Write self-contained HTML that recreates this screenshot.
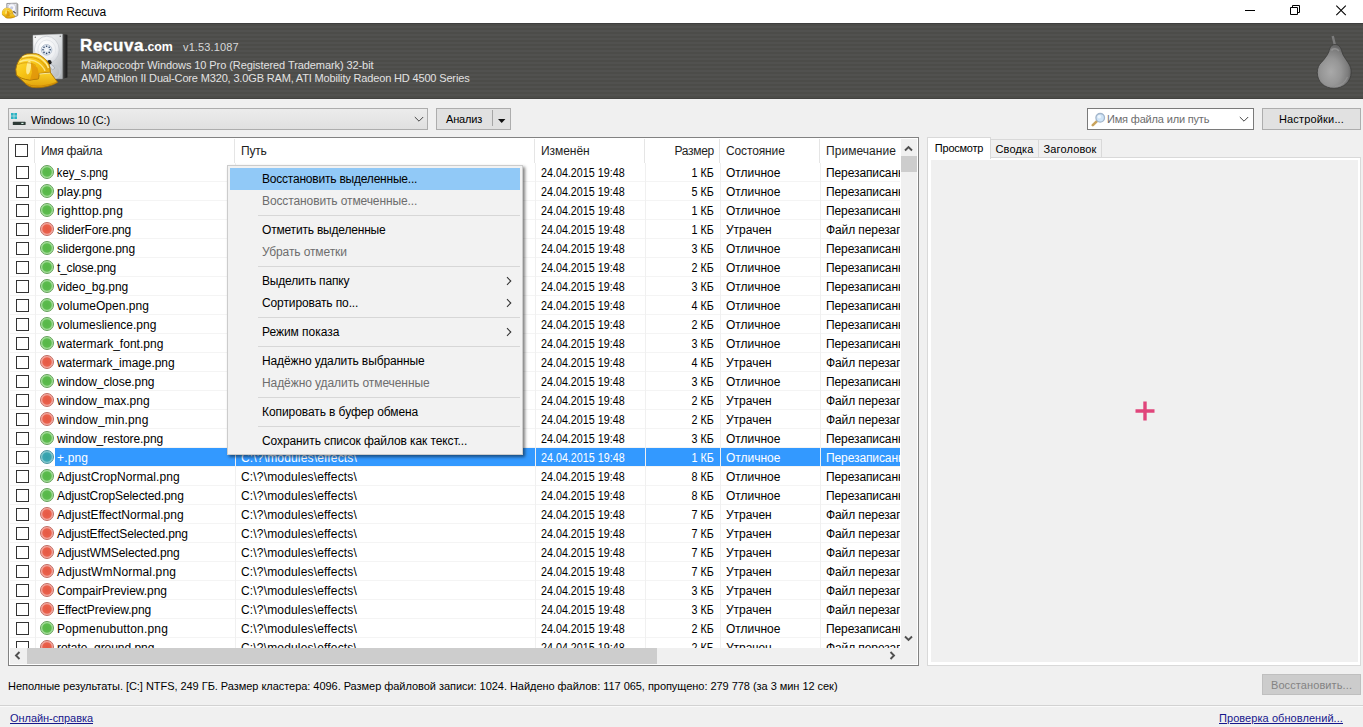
<!DOCTYPE html>
<html lang="ru">
<head>
<meta charset="utf-8">
<title>Piriform Recuva</title>
<style>
*{box-sizing:border-box;margin:0;padding:0}
html,body{width:1363px;height:727px;overflow:hidden;background:#f0f0f0}
body{position:relative;font-family:"Liberation Sans",sans-serif;font-size:12px;color:#000}
i{font-style:normal;display:block}
u{text-decoration:none;display:inline-block;transform-origin:0 50%}
.abs{position:absolute}

/* title bar */
#title{position:absolute;left:0;top:0;width:1363px;height:23px;background:#fff}
#title .t{position:absolute;left:23px;top:5px;font-size:12px;line-height:15px;color:#000;white-space:nowrap}

/* dark header */
#hdr{position:absolute;left:0;top:23px;width:1363px;height:76px;
 background:repeating-linear-gradient(to bottom,#4c4c49 0,#4c4c49 2px,#51514f 2px,#51514f 4px);
 border-top:1px solid #3e3e3e;border-bottom:1px solid #424240}
#hdr .brand{position:absolute;left:80px;top:10px;color:#fff;font-weight:bold;font-size:17px;line-height:24px;white-space:nowrap}
#hdr .brand small{font-size:12.4px}
#hdr .brand .b1{-webkit-text-stroke:.35px #fff}
#hdr .ver{position:absolute;left:183px;top:17px;color:#d8d8d8;font-size:11px;line-height:13px;white-space:nowrap}
#hdr .l2,#hdr .l3{position:absolute;left:81px;color:#e2e2e2;font-size:11px;line-height:13px;white-space:nowrap}
#hdr .l2{top:35px}
#hdr .l3{top:48px}

/* toolbar */
.combo{position:absolute;left:8px;top:108px;width:420px;height:22px;border:1px solid #adadad;background:linear-gradient(#ececec,#e0e0e0)}
.combo .tx{position:absolute;left:22px;top:4px;line-height:14px;font-size:11px;white-space:nowrap}
.btn{position:absolute;height:22px;border:1px solid #adadad;background:#e1e1e1;font-size:11px;line-height:20px;text-align:center;white-space:nowrap}
.search{position:absolute;left:1087px;top:108px;width:167px;height:22px;border:1px solid #7a7a7a;background:#fff}
.search .tx{position:absolute;left:19px;top:3px;line-height:14px;font-size:11px;color:#6d6d6d;white-space:nowrap}

/* list */
#list{position:absolute;left:8px;top:137px;width:911px;height:529px;border:1px solid #828282;background:#fff}
#lc{position:absolute;left:1px;top:1px;width:907px;height:525px;overflow:hidden;background:#fff}
.vg{position:absolute;top:24px;width:1px;height:485px;background:#f0f0f0}
#lhead{position:absolute;left:0;top:0;width:891px;height:24px;background:#fff}
#lhead span{position:absolute;top:5px;line-height:15px;font-size:12px;white-space:nowrap;color:#1e1e1e}
.vsep{position:absolute;top:0;width:1px;height:24px;background:#e5e5e5}
.row{position:absolute;left:0;width:901px;height:19px;border-bottom:1px solid #f4f4f4}
.row .c{position:absolute;top:2px;height:17px;line-height:17px;font-size:12px;white-space:nowrap;overflow:hidden}
.row .c b{font-weight:normal;display:inline-block;height:17px;padding:0 2px;transform-origin:0 50%}
.sz u{transform-origin:100% 50%}
.cb{position:absolute;left:16px;top:3px;width:13px;height:13px;border:1px solid #333;background:#fff}
.dot{position:absolute;left:40px;top:2px;width:14px;height:14px;border-radius:50%;border:1px solid}
.dg{border-color:#62a057;background:radial-gradient(circle closest-side,#56b747 0,#5cbb4e 70%,#98d88d 84%,#b0e3a7 100%)}
.dr{border-color:#c06a60;background:radial-gradient(circle closest-side,#e65843 0,#e9614c 70%,#f29d93 84%,#f6b2aa 100%)}
.ds{border-color:#47939e;background:radial-gradient(circle closest-side,#339fab 0,#3ba6b1 70%,#79c4cb 84%,#92cfd5 100%)}
.nm{left:55px;width:180px}
.pt{left:241px;width:290px}
.dt{left:541px;width:100px}
.sz{left:645px;width:69px;text-align:right}
.stt{left:726px;width:92px}
.nt{left:826px;width:75px;letter-spacing:-.1px}
.row.sel .c{color:#fff}
.row.sel .selbg{display:block}
.selbar{position:absolute;left:55px;width:845px;height:18px;background:#3399ff}

/* scrollbars */
.sbv{position:absolute;left:891px;top:0;width:16px;height:509px;background:#f0f0f0}
.sbh{position:absolute;left:0;top:509px;width:907px;height:16px;background:#f0f0f0}
.thumb{position:absolute;background:#cdcdcd}

/* menu */
#menu{position:absolute;left:227px;top:165px;width:296px;height:290px;background:#f2f2f2;border:1px solid #ccc;box-shadow:2px 2px 3px rgba(0,0,0,.5);padding:2px}
#menu .it{height:22px;line-height:22px;padding-left:32px;font-size:12px;white-space:nowrap;position:relative;color:#000}
#menu .it.hl{background:#91c9f7}
#menu .it.dis{color:#6d6d6d}
#menu .sp{height:7px;position:relative}
#menu .sp:after{content:"";position:absolute;left:28px;right:0;top:3px;height:1px;background:#d7d7d7}
#menu svg{position:absolute;right:8px;top:6px}

/* right pane */
.tab{position:absolute;font-size:11px;line-height:14px;white-space:nowrap;text-align:center;color:#000}
#pane{position:absolute;left:927px;top:157px;width:434px;height:509px;border:1px solid #d9d9d9;background:#fff;padding:2px 2px 3px 3px}
#pane i{width:100%;height:100%;background:#f0f0f0}

/* status */
#status{position:absolute;left:8px;top:679px;font-size:11px;line-height:14px;white-space:nowrap;color:#000}
#hr{position:absolute;left:0;top:705px;width:1363px;height:1px;background:#d2d2d2}
.lnk{position:absolute;top:711px;font-size:11px;line-height:14px;color:#17178c;text-decoration:underline;white-space:nowrap}
/*FIT*/
#title .t{letter-spacing:-0.157px}
#hdr .brand .b1{letter-spacing:0.619px}
#hdr .brand small{letter-spacing:-0.105px}
#hdr .ver{letter-spacing:0.126px}
#hdr .l2{letter-spacing:-0.084px}
#hdr .l3{letter-spacing:-0.157px}
.combo .tx{letter-spacing:-0.153px}
#bAn span{letter-spacing:-0.190px}
.search .tx{letter-spacing:-0.172px}
#bSet span{letter-spacing:0.174px}
#h1{letter-spacing:-0.282px}
#h2{letter-spacing:-0.244px}
#h3{letter-spacing:-0.055px}
#h4{letter-spacing:-0.292px}
#h5{letter-spacing:-0.132px}
#h6{letter-spacing:0.053px}
#m1{letter-spacing:-0.211px}
#m2{letter-spacing:-0.111px}
#m3{letter-spacing:-0.192px}
#m4{letter-spacing:-0.106px}
#m5{letter-spacing:-0.175px}
#m6{letter-spacing:-0.112px}
#m7{letter-spacing:-0.036px}
#m8{letter-spacing:-0.117px}
#m9{letter-spacing:-0.079px}
#m10{letter-spacing:-0.080px}
#m11{letter-spacing:-0.094px}
#t1{letter-spacing:-0.244px}
#t2{letter-spacing:0.177px}
#t3{letter-spacing:0.120px}
#status span{letter-spacing:-0.041px}
#bRec span{letter-spacing:0.099px}
#lk1{letter-spacing:-0.055px}
#lk2{letter-spacing:0.063px}
#r0 .nm b{display:inline-block;transform:scaleX(0.9341)}
#r1 .nm b{letter-spacing:0.052px}
#r2 .nm b{letter-spacing:0.226px}
#r3 .nm b{letter-spacing:-0.187px}
#r4 .nm b{letter-spacing:-0.052px}
#r5 .nm b{letter-spacing:-0.208px}
#r6 .nm b{letter-spacing:-0.082px}
#r7 .nm b{letter-spacing:0.042px}
#r8 .nm b{letter-spacing:-0.000px}
#r9 .nm b{letter-spacing:0.019px}
#r10 .nm b{letter-spacing:-0.060px}
#r11 .nm b{letter-spacing:-0.035px}
#r12 .nm b{letter-spacing:-0.008px}
#r13 .nm b{letter-spacing:0.151px}
#r14 .nm b{letter-spacing:-0.067px}
#r15 .nm b{letter-spacing:0.145px}
#r16 .nm b{letter-spacing:0.065px}
#r17 .nm b{letter-spacing:-0.124px}
#r18 .nm b{letter-spacing:0.039px}
#r19 .nm b{letter-spacing:-0.124px}
#r20 .nm b{letter-spacing:-0.102px}
#r21 .nm b{letter-spacing:0.128px}
#r22 .nm b{letter-spacing:-0.040px}
#r23 .nm b{letter-spacing:-0.103px}
#r24 .nm b{letter-spacing:0.171px}
#r25 .nm b{letter-spacing:-0.047px}
.pt u{letter-spacing:0.167px}
.dt u{display:inline-block;transform:scaleX(0.8949)}
.sz u{display:inline-block;transform:scaleX(0.8965)}
.stt u{letter-spacing:-0.013px}
/*ENDFIT*/
</style>
</head>
<body>
<svg width="0" height="0" style="position:absolute"><defs>
      <linearGradient id="hd" x1="0" y1="0" x2="1" y2="1"><stop offset="0" stop-color="#fbfbfb"/><stop offset=".55" stop-color="#dcdfe2"/><stop offset="1" stop-color="#aeb2b6"/></linearGradient>
      <linearGradient id="sd" x1="0" y1="0" x2="1" y2="0"><stop offset="0" stop-color="#5a5a5a"/><stop offset=".5" stop-color="#2c2c2c"/><stop offset="1" stop-color="#1c1c1c"/></linearGradient>
      <radialGradient id="pl" cx=".4" cy=".35" r=".75"><stop offset="0" stop-color="#ffffff"/><stop offset=".7" stop-color="#eceef1"/><stop offset="1" stop-color="#c9cdd3"/></radialGradient>
      <linearGradient id="hat" x1="0" y1="0" x2="1" y2="1"><stop offset="0" stop-color="#ffe24a"/><stop offset=".45" stop-color="#f8c617"/><stop offset="1" stop-color="#dd9c07"/></linearGradient>
      <linearGradient id="brim" x1="0" y1="0" x2="0" y2="1"><stop offset="0" stop-color="#fbd22a"/><stop offset="1" stop-color="#e0a008"/></linearGradient>
    </defs><symbol id="hdd" viewBox="0 0 58 60">
    
    <path d="M48.300 1.100L53.400 1.800L53.400 44.400L48.300 45.700Z" fill="url(#sd)"/>
    <path d="M19 2.300L48.300 1.100L48.300 45.700L19.400 45.700Z" fill="url(#hd)" stroke="#b9bcc0" stroke-width=".5"/>
    <circle cx="21.300" cy="4.300" r=".8" fill="#777"/><circle cx="46.300" cy="3.300" r=".8" fill="#777"/>
    <ellipse cx="32.800" cy="17" rx="12.400" ry="13.800" fill="url(#pl)" stroke="#c3c7cd" stroke-width=".7"/>
    <ellipse cx="32.800" cy="17" rx="9" ry="10" fill="none" stroke="#e3e6ea" stroke-width="1"/>
    <circle cx="32.600" cy="16.800" r="5.300" fill="#e3eaf2" stroke="#aab6c6" stroke-width=".8"/>
    <g fill="#2f4568"><circle cx="32.600" cy="13.200" r=".8"/><circle cx="35.200" cy="14.300" r=".8"/><circle cx="36.200" cy="16.800" r=".8"/><circle cx="35.200" cy="19.400" r=".8"/><circle cx="32.600" cy="20.400" r=".8"/><circle cx="30" cy="19.400" r=".8"/><circle cx="29" cy="16.800" r=".8"/><circle cx="30" cy="14.300" r=".8"/></g>
    <circle cx="32.600" cy="16.800" r="1.500" fill="#f6f9fc"/>
    <path d="M38 33 C43 31 46.500 35 46 40 C45.500 44 42 45.500 39 45" fill="none" stroke="#c3c8ce" stroke-width="1.600"/>
    <path d="M34 27.500L41 35L38.500 37L32.500 30Z" fill="#d9dde2" stroke="#8d9198" stroke-width=".5"/>
    <circle cx="35.400" cy="29.200" r="2.200" fill="#1f1f1f"/>
    </symbol><symbol id="helmet" viewBox="0 0 58 60">
    <path d="M2.400 42 L11.600 50.800 C14 53 17 54.400 18.900 54.400 C27 55.500 38 53 43.600 49.300 L36.400 39.500 L25 40.500 L24.500 45.700 L15.800 46.700 Z" fill="url(#brim)" stroke="#a87204" stroke-width=".9" stroke-linejoin="round"/>
    <path d="M2.400 42 L1.800 36.400 C2.500 31 5 26.500 7.500 24 C10 22 12 21 13.200 20.900 L22 20.700 C25 21.500 26 22 27.100 23 C30 25 31.500 26.500 32.300 27.100 C34 29.500 35 31 35.400 32.200 C36 35 36.400 37 36.400 39.500 L25 40.500 L24.500 45.700 L15.800 47.200 C10 46.500 5 44.500 2.400 42 Z" fill="url(#hat)" stroke="#a87204" stroke-width=".9" stroke-linejoin="round"/>
    <path d="M16.600 29.200 L23.500 34.700 L24.800 40.500 L24.500 45.700 L16 46.900 L18 39.500 Z" fill="#de8f08" opacity=".7"/>
    <ellipse cx="14.600" cy="34.500" rx="2.300" ry="7" fill="#fff6b4" opacity=".75" transform="rotate(8 14.600 34.500)"/>
    <path d="M8.400 24 C14 21.300 22 21.800 27 25.300 C31 28.300 33.500 31.300 34.500 35" fill="none" stroke="#fff0a0" stroke-width="1.500" opacity=".9"/>
    <path d="M7 26.300 C13 23.500 21 24 26 27.500 C29.800 30.300 32.300 33.300 33.300 36.800" fill="none" stroke="#d4940a" stroke-width=".9" opacity=".85"/>
    <path d="M5.500 28.800 C11.500 26 19.500 26.500 24.500 30 C28 32.500 30 35 31 38" fill="none" stroke="#fff0a0" stroke-width="1.400" opacity=".8"/>
    <path d="M4.300 31.500 C10 28.800 17.500 29.200 22 32.500" fill="none" stroke="#d4940a" stroke-width=".9" opacity=".8"/>
    <path d="M25.200 41 L36 40.100" stroke="#fff3a8" stroke-width="1" opacity=".9"/>
    <path d="M12 50.800 C20 55 34 53 43 49.200" fill="none" stroke="#c98608" stroke-width="1.200" opacity=".8"/>
  </symbol></svg>

<div id="title">
  <svg class="abs" style="left:0;top:0" width="22" height="22" viewBox="0 0 22 22">
    <path d="M6.800 3.500L16.500 3.200L17.800 4L17.800 15.500L16.500 16.300L7 16.300Z" fill="#e6e8ec" stroke="#8d8d8d" stroke-width=".9" stroke-linejoin="round"/>
    <path d="M16.500 3.200L17.800 4L17.800 15.500L16.500 16.300Z" fill="#9c9c9c"/>
    <ellipse cx="11.800" cy="8" rx="3.800" ry="4.200" fill="#f8f8fc" stroke="#b4b6c8" stroke-width=".6"/>
    <circle cx="11.700" cy="7.800" r="1.600" fill="#c6cce6"/>
    <path d="M13.200 11.200L15.800 13.200" stroke="#555" stroke-width="1.200"/>
    <svg x="1.400" y="1.700" width="18.600" height="18.300" viewBox="0 0 58 60" preserveAspectRatio="none"><use href="#helmet"/></svg>
  </svg>
  <div class="t">Piriform Recuva</div>
  <!-- window controls -->
  <svg class="abs" style="left:1230px;top:0" width="133" height="23" viewBox="0 0 133 23">
    <path d="M15 10.5H25" stroke="#000" stroke-width="1"/>
    <path d="M60.5 7.5H67.5V14.5H60.5Z M62.500 7.5V5.500H69.500V12.500H67.5" stroke="#000" stroke-width="1" fill="none"/>
    <path d="M106.300 5.700L115.800 15.200M115.800 5.700L106.300 15.200" stroke="#000" stroke-width="1.050"/>
  </svg>
</div>

<div id="hdr">
  <!-- logo -->
  <svg class="abs" style="left:14px;top:9px" width="58" height="60"><use href="#hdd"/><use href="#helmet"/></svg>
  <div class="brand"><span class="b1">Recuva</span><small>.com</small></div>
  <div class="ver">v1.53.1087</div>
  <div class="l2">Майкрософт Windows 10 Pro (Registered Trademark) 32-bit</div>
  <div class="l3">AMD Athlon II Dual-Core M320, 3.0GB RAM, ATI Mobility Radeon HD 4500 Series</div>
  <!-- pear -->
  <svg class="abs" style="left:1314px;top:9px" width="40" height="60" viewBox="0 0 40 60">
    <defs><radialGradient id="pr" cx=".4" cy=".62" r=".6"><stop offset="0" stop-color="#a9a9a9"/><stop offset=".5" stop-color="#969696"/><stop offset=".85" stop-color="#7c7c7c"/><stop offset="1" stop-color="#666"/></radialGradient></defs>
    <path d="M18.700 3L21 12.500" stroke="#7c7c7c" stroke-width="2.400" fill="none"/>
    <path d="M21 11.500 C24.500 11.500 27 14 28 19 C29 23 31.500 25.500 34 29.500 C36.500 33 37.200 36 37.200 39 C37.200 49 29 55.300 20 55.300 C10.500 55.300 3.300 49 3.300 39.500 C3.300 35 5 31.500 7.400 29.500 C10.500 26 13 23 14.800 19 C16 14 17.500 11.500 21 11.500 Z" fill="url(#pr)" stroke="#3a3a38" stroke-width="1" stroke-opacity=".75"/>
    <path d="M17.500 17.500 C19 15 23 15 25 18" stroke="#a4a4a4" stroke-width="1.600" fill="none" opacity=".6"/>
    <path d="M33.500 44 C31 50 26 53 21 53.500" stroke="#9a9a9a" stroke-width="1.200" fill="none" opacity=".55"/>
  </svg>
</div>

<!-- toolbar -->
<div class="combo">
  <svg class="abs" style="left:2px;top:4px" width="16" height="13" viewBox="0 0 16 13">
    <rect x="0" y="0" width="2.700" height="2.700" fill="#2bb3c4"/><rect x="3.300" y="0" width="2.700" height="2.700" fill="#2bb3c4"/>
    <rect x="0" y="3.300" width="2.700" height="2.700" fill="#2bb3c4"/><rect x="3.300" y="3.300" width="2.700" height="2.700" fill="#2bb3c4"/>
    <rect x="1.800" y="8.800" width="12.800" height="3.200" rx=".6" fill="#2e3a36"/><rect x="10.300" y="9.800" width="2.200" height="1.200" fill="#d4f2e4"/>
  </svg>
  <div class="tx">Windows 10 (C:)</div>
  <svg class="abs" style="left:405px;top:7px" width="10" height="7" viewBox="0 0 10 7"><path d="M.8 1L5 5.200L9.200 1" stroke="#444" stroke-width="1" fill="none"/></svg>
</div>
<div class="btn" style="left:436px;top:108px;width:75px;text-align:left;padding-left:9px" id="bAn"><span>Анализ</span>
  <i class="abs" style="left:55px;top:1px;width:1px;height:16px;background:#a6a6a6"></i>
  <svg class="abs" style="left:61px;top:10px" width="8" height="4" viewBox="0 0 8 4"><path d="M0 0H7.400L3.700 4Z" fill="#111"/></svg>
</div>
<div class="search">
  <svg class="abs" style="left:3px;top:3px" width="15" height="15" viewBox="0 0 15 15">
    <path d="M6.200 8.800L1.800 13.200" stroke="#c9a35c" stroke-width="2.600" stroke-linecap="round"/>
    <circle cx="9.200" cy="5.800" r="4.300" fill="#cfe4f7" stroke="#a3b6cb" stroke-width="1.300"/>
    <circle cx="8.200" cy="4.800" r="1.800" fill="#eef6fd"/>
  </svg>
  <div class="tx">Имя файла или путь</div>
  <svg class="abs" style="left:151px;top:7px" width="10" height="7" viewBox="0 0 10 7"><path d="M.8 1L5 5.200L9.200 1" stroke="#444" stroke-width="1" fill="none"/></svg>
</div>
<div class="btn" style="left:1262px;top:108px;width:99px" id="bSet"><span>Настройки...</span></div>

<!-- list -->
<div id="list"><div id="lc">
  <div id="lhead">
    <i class="cb" style="left:5px;top:5px"></i>
    <span style="left:31px"><u id="h1">Имя файла</u></span>
    <span style="left:231px"><u id="h2">Путь</u></span>
    <span style="left:531px"><u id="h3">Изменён</u></span>
    <span style="left:634px;width:70px;text-align:right"><u id="h4">Размер</u></span>
    <span style="left:716px"><u id="h5">Состояние</u></span>
    <span style="left:816px"><u id="h6">Примечание</u></span>
    <i class="vsep" style="left:24px"></i><i class="vsep" style="left:224px"></i><i class="vsep" style="left:524px"></i>
    <i class="vsep" style="left:634px"></i><i class="vsep" style="left:709px"></i><i class="vsep" style="left:809px"></i>
  </div>
  <div id="rows" class="abs" style="left:-10px;top:-139px;width:900px;height:648px;overflow:hidden">
    <i class="selbar" style="top:448px"></i>
<div class="row" id="r0" style="top:163px"><i class="cb"></i><i class="dot dg"></i><span class="c nm"><b>key_s.png</b></span><span class="c pt"><u>C:\?\modules\effects\</u></span><span class="c dt"><u>24.04.2015 19:48</u></span><span class="c sz"><u>1 КБ</u></span><span class="c stt"><u>Отличное</u></span><span class="c nt"><u>Перезаписанный</u></span></div>
<div class="row" id="r1" style="top:182px"><i class="cb"></i><i class="dot dg"></i><span class="c nm"><b>play.png</b></span><span class="c pt"><u>C:\?\modules\effects\</u></span><span class="c dt"><u>24.04.2015 19:48</u></span><span class="c sz"><u>5 КБ</u></span><span class="c stt"><u>Отличное</u></span><span class="c nt"><u>Перезаписанный</u></span></div>
<div class="row" id="r2" style="top:201px"><i class="cb"></i><i class="dot dg"></i><span class="c nm"><b>righttop.png</b></span><span class="c pt"><u>C:\?\modules\effects\</u></span><span class="c dt"><u>24.04.2015 19:48</u></span><span class="c sz"><u>1 КБ</u></span><span class="c stt"><u>Отличное</u></span><span class="c nt"><u>Перезаписанный</u></span></div>
<div class="row" id="r3" style="top:220px"><i class="cb"></i><i class="dot dr"></i><span class="c nm"><b>sliderFore.png</b></span><span class="c pt"><u>C:\?\modules\effects\</u></span><span class="c dt"><u>24.04.2015 19:48</u></span><span class="c sz"><u>1 КБ</u></span><span class="c stt"><u>Утрачен</u></span><span class="c nt"><u>Файл перезаписан</u></span></div>
<div class="row" id="r4" style="top:239px"><i class="cb"></i><i class="dot dg"></i><span class="c nm"><b>slidergone.png</b></span><span class="c pt"><u>C:\?\modules\effects\</u></span><span class="c dt"><u>24.04.2015 19:48</u></span><span class="c sz"><u>3 КБ</u></span><span class="c stt"><u>Отличное</u></span><span class="c nt"><u>Перезаписанный</u></span></div>
<div class="row" id="r5" style="top:258px"><i class="cb"></i><i class="dot dg"></i><span class="c nm"><b>t_close.png</b></span><span class="c pt"><u>C:\?\modules\effects\</u></span><span class="c dt"><u>24.04.2015 19:48</u></span><span class="c sz"><u>2 КБ</u></span><span class="c stt"><u>Отличное</u></span><span class="c nt"><u>Перезаписанный</u></span></div>
<div class="row" id="r6" style="top:277px"><i class="cb"></i><i class="dot dg"></i><span class="c nm"><b>video_bg.png</b></span><span class="c pt"><u>C:\?\modules\effects\</u></span><span class="c dt"><u>24.04.2015 19:48</u></span><span class="c sz"><u>3 КБ</u></span><span class="c stt"><u>Отличное</u></span><span class="c nt"><u>Перезаписанный</u></span></div>
<div class="row" id="r7" style="top:296px"><i class="cb"></i><i class="dot dg"></i><span class="c nm"><b>volumeOpen.png</b></span><span class="c pt"><u>C:\?\modules\effects\</u></span><span class="c dt"><u>24.04.2015 19:48</u></span><span class="c sz"><u>4 КБ</u></span><span class="c stt"><u>Отличное</u></span><span class="c nt"><u>Перезаписанный</u></span></div>
<div class="row" id="r8" style="top:315px"><i class="cb"></i><i class="dot dg"></i><span class="c nm"><b>volumeslience.png</b></span><span class="c pt"><u>C:\?\modules\effects\</u></span><span class="c dt"><u>24.04.2015 19:48</u></span><span class="c sz"><u>2 КБ</u></span><span class="c stt"><u>Отличное</u></span><span class="c nt"><u>Перезаписанный</u></span></div>
<div class="row" id="r9" style="top:334px"><i class="cb"></i><i class="dot dg"></i><span class="c nm"><b>watermark_font.png</b></span><span class="c pt"><u>C:\?\modules\effects\</u></span><span class="c dt"><u>24.04.2015 19:48</u></span><span class="c sz"><u>3 КБ</u></span><span class="c stt"><u>Отличное</u></span><span class="c nt"><u>Перезаписанный</u></span></div>
<div class="row" id="r10" style="top:353px"><i class="cb"></i><i class="dot dr"></i><span class="c nm"><b>watermark_image.png</b></span><span class="c pt"><u>C:\?\modules\effects\</u></span><span class="c dt"><u>24.04.2015 19:48</u></span><span class="c sz"><u>4 КБ</u></span><span class="c stt"><u>Утрачен</u></span><span class="c nt"><u>Файл перезаписан</u></span></div>
<div class="row" id="r11" style="top:372px"><i class="cb"></i><i class="dot dg"></i><span class="c nm"><b>window_close.png</b></span><span class="c pt"><u>C:\?\modules\effects\</u></span><span class="c dt"><u>24.04.2015 19:48</u></span><span class="c sz"><u>3 КБ</u></span><span class="c stt"><u>Отличное</u></span><span class="c nt"><u>Перезаписанный</u></span></div>
<div class="row" id="r12" style="top:391px"><i class="cb"></i><i class="dot dr"></i><span class="c nm"><b>window_max.png</b></span><span class="c pt"><u>C:\?\modules\effects\</u></span><span class="c dt"><u>24.04.2015 19:48</u></span><span class="c sz"><u>2 КБ</u></span><span class="c stt"><u>Утрачен</u></span><span class="c nt"><u>Файл перезаписан</u></span></div>
<div class="row" id="r13" style="top:410px"><i class="cb"></i><i class="dot dr"></i><span class="c nm"><b>window_min.png</b></span><span class="c pt"><u>C:\?\modules\effects\</u></span><span class="c dt"><u>24.04.2015 19:48</u></span><span class="c sz"><u>2 КБ</u></span><span class="c stt"><u>Утрачен</u></span><span class="c nt"><u>Файл перезаписан</u></span></div>
<div class="row" id="r14" style="top:429px"><i class="cb"></i><i class="dot dg"></i><span class="c nm"><b>window_restore.png</b></span><span class="c pt"><u>C:\?\modules\effects\</u></span><span class="c dt"><u>24.04.2015 19:48</u></span><span class="c sz"><u>3 КБ</u></span><span class="c stt"><u>Отличное</u></span><span class="c nt"><u>Перезаписанный</u></span></div>
<div class="row sel" id="r15" style="top:448px"><i class="cb"></i><i class="dot ds"></i><span class="c nm"><b>+.png</b></span><span class="c pt"><u>C:\?\modules\effects\</u></span><span class="c dt"><u>24.04.2015 19:48</u></span><span class="c sz"><u>1 КБ</u></span><span class="c stt"><u>Отличное</u></span><span class="c nt"><u>Перезаписанный</u></span></div>
<div class="row" id="r16" style="top:467px"><i class="cb"></i><i class="dot dg"></i><span class="c nm"><b>AdjustCropNormal.png</b></span><span class="c pt"><u>C:\?\modules\effects\</u></span><span class="c dt"><u>24.04.2015 19:48</u></span><span class="c sz"><u>8 КБ</u></span><span class="c stt"><u>Отличное</u></span><span class="c nt"><u>Перезаписанный</u></span></div>
<div class="row" id="r17" style="top:486px"><i class="cb"></i><i class="dot dg"></i><span class="c nm"><b>AdjustCropSelected.png</b></span><span class="c pt"><u>C:\?\modules\effects\</u></span><span class="c dt"><u>24.04.2015 19:48</u></span><span class="c sz"><u>8 КБ</u></span><span class="c stt"><u>Отличное</u></span><span class="c nt"><u>Перезаписанный</u></span></div>
<div class="row" id="r18" style="top:505px"><i class="cb"></i><i class="dot dr"></i><span class="c nm"><b>AdjustEffectNormal.png</b></span><span class="c pt"><u>C:\?\modules\effects\</u></span><span class="c dt"><u>24.04.2015 19:48</u></span><span class="c sz"><u>7 КБ</u></span><span class="c stt"><u>Утрачен</u></span><span class="c nt"><u>Файл перезаписан</u></span></div>
<div class="row" id="r19" style="top:524px"><i class="cb"></i><i class="dot dr"></i><span class="c nm"><b>AdjustEffectSelected.png</b></span><span class="c pt"><u>C:\?\modules\effects\</u></span><span class="c dt"><u>24.04.2015 19:48</u></span><span class="c sz"><u>7 КБ</u></span><span class="c stt"><u>Утрачен</u></span><span class="c nt"><u>Файл перезаписан</u></span></div>
<div class="row" id="r20" style="top:543px"><i class="cb"></i><i class="dot dr"></i><span class="c nm"><b>AdjustWMSelected.png</b></span><span class="c pt"><u>C:\?\modules\effects\</u></span><span class="c dt"><u>24.04.2015 19:48</u></span><span class="c sz"><u>7 КБ</u></span><span class="c stt"><u>Утрачен</u></span><span class="c nt"><u>Файл перезаписан</u></span></div>
<div class="row" id="r21" style="top:562px"><i class="cb"></i><i class="dot dr"></i><span class="c nm"><b>AdjustWmNormal.png</b></span><span class="c pt"><u>C:\?\modules\effects\</u></span><span class="c dt"><u>24.04.2015 19:48</u></span><span class="c sz"><u>7 КБ</u></span><span class="c stt"><u>Утрачен</u></span><span class="c nt"><u>Файл перезаписан</u></span></div>
<div class="row" id="r22" style="top:581px"><i class="cb"></i><i class="dot dr"></i><span class="c nm"><b>CompairPreview.png</b></span><span class="c pt"><u>C:\?\modules\effects\</u></span><span class="c dt"><u>24.04.2015 19:48</u></span><span class="c sz"><u>3 КБ</u></span><span class="c stt"><u>Утрачен</u></span><span class="c nt"><u>Файл перезаписан</u></span></div>
<div class="row" id="r23" style="top:600px"><i class="cb"></i><i class="dot dr"></i><span class="c nm"><b>EffectPreview.png</b></span><span class="c pt"><u>C:\?\modules\effects\</u></span><span class="c dt"><u>24.04.2015 19:48</u></span><span class="c sz"><u>3 КБ</u></span><span class="c stt"><u>Утрачен</u></span><span class="c nt"><u>Файл перезаписан</u></span></div>
<div class="row" id="r24" style="top:619px"><i class="cb"></i><i class="dot dg"></i><span class="c nm"><b>Popmenubutton.png</b></span><span class="c pt"><u>C:\?\modules\effects\</u></span><span class="c dt"><u>24.04.2015 19:48</u></span><span class="c sz"><u>2 КБ</u></span><span class="c stt"><u>Отличное</u></span><span class="c nt"><u>Перезаписанный</u></span></div>
<div class="row" id="r25" style="top:638px"><i class="cb"></i><i class="dot dr"></i><span class="c nm"><b>rotate_ground.png</b></span><span class="c pt"><u>C:\?\modules\effects\</u></span><span class="c dt"><u>24.04.2015 19:48</u></span><span class="c sz"><u>2 КБ</u></span><span class="c stt"><u>Утрачен</u></span><span class="c nt"><u>Файл перезаписан</u></span></div>
  </div>
  <!-- vertical column guide lines -->
  <i class="vg" style="left:25px"></i><i class="vg" style="left:225px"></i><i class="vg" style="left:525px"></i>
  <i class="vg" style="left:635px"></i><i class="vg" style="left:710px"></i><i class="vg" style="left:810px"></i>
  <div class="sbv">
    <svg class="abs" style="left:3px;top:5.500px" width="9" height="7" viewBox="0 0 9 7"><path d="M1 5.500L4.500 2L8 5.500" stroke="#505050" stroke-width="1.900" fill="none"/></svg>
    <i class="thumb" style="left:0;top:17px;width:16px;height:16px"></i>
    <svg class="abs" style="left:3px;top:496px" width="9" height="7" viewBox="0 0 9 7"><path d="M1 1.500L4.500 5L8 1.500" stroke="#505050" stroke-width="1.900" fill="none"/></svg>
  </div>
  <div class="sbh">
    <svg class="abs" style="left:4px;top:3px" width="7" height="9" viewBox="0 0 7 9"><path d="M5.500 1L2 4.500L5.500 8" stroke="#505050" stroke-width="1.900" fill="none"/></svg>
    <i class="thumb" style="left:17px;top:0;width:630px;height:16px"></i>
    <svg class="abs" style="left:879px;top:3px" width="7" height="9" viewBox="0 0 7 9"><path d="M1.500 1L5 4.500L1.500 8" stroke="#505050" stroke-width="1.900" fill="none"/></svg>
  </div>
</div></div>

<!-- context menu -->
<div id="menu">
  <div class="it hl"><u id="m1">Восстановить выделенные...</u></div>
  <div class="it dis"><u id="m2">Восстановить отмеченные...</u></div>
  <div class="sp"></div>
  <div class="it"><u id="m3">Отметить выделенные</u></div>
  <div class="it dis"><u id="m4">Убрать отметки</u></div>
  <div class="sp"></div>
  <div class="it"><u id="m5">Выделить папку</u><svg width="6" height="10" viewBox="0 0 6 10"><path d="M1 1.200L4.800 5L1 8.800" stroke="#333" stroke-width="1.100" fill="none"/></svg></div>
  <div class="it"><u id="m6">Сортировать по...</u><svg width="6" height="10" viewBox="0 0 6 10"><path d="M1 1.200L4.800 5L1 8.800" stroke="#333" stroke-width="1.100" fill="none"/></svg></div>
  <div class="sp"></div>
  <div class="it"><u id="m7">Режим показа</u><svg width="6" height="10" viewBox="0 0 6 10"><path d="M1 1.200L4.800 5L1 8.800" stroke="#333" stroke-width="1.100" fill="none"/></svg></div>
  <div class="sp"></div>
  <div class="it"><u id="m8">Надёжно удалить выбранные</u></div>
  <div class="it dis"><u id="m9">Надёжно удалить отмеченные</u></div>
  <div class="sp"></div>
  <div class="it"><u id="m10">Копировать в буфер обмена</u></div>
  <div class="sp"></div>
  <div class="it"><u id="m11">Сохранить список файлов как текст...</u></div>
</div>

<!-- right pane -->
<div id="pane"><i></i></div>
<div class="tab" style="left:927px;top:137px;width:64px;height:22px;background:#fff;border:1px solid #d9d9d9;border-bottom:none;padding-top:3px"><u id="t1">Просмотр</u></div>
<div class="tab" style="left:991px;top:139px;width:48px;height:18px;border:1px solid #d9d9d9;border-left:none;border-bottom:none;padding-top:2px"><u id="t2">Сводка</u></div>
<div class="tab" style="left:1039px;top:139px;width:63px;height:18px;border:1px solid #d9d9d9;border-left:none;border-bottom:none;padding-top:2px"><u id="t3">Заголовок</u></div>
<svg class="abs" style="left:1135px;top:401px" width="20" height="20" viewBox="0 0 20 20"><path d="M10 0.500V19.500M0.500 10H19.500" stroke="#e0457b" stroke-width="3.400"/></svg>

<!-- status -->
<div id="status"><span>Неполные результаты. [C:] NTFS, 249 ГБ. Размер кластера: 4096. Размер файловой записи: 1024. Найдено файлов: 117 065, пропущено: 279 778 (за 3 мин 12 сек)</span></div>
<div class="btn" style="left:1262px;top:674px;width:99px;height:21px;background:#cccccc;border-color:#bfbfbf;color:#838383;line-height:21px" id="bRec"><span>Восстановить...</span></div>
<div id="hr"></div><i class="abs" style="left:0;top:706px;width:1363px;height:1px;background:#fafafa"></i>
<div class="lnk" style="left:10px" id="lk1">Онлайн-справка</div>
<div class="lnk" style="left:1219px" id="lk2">Проверка обновлений...</div>

</body>
</html>
